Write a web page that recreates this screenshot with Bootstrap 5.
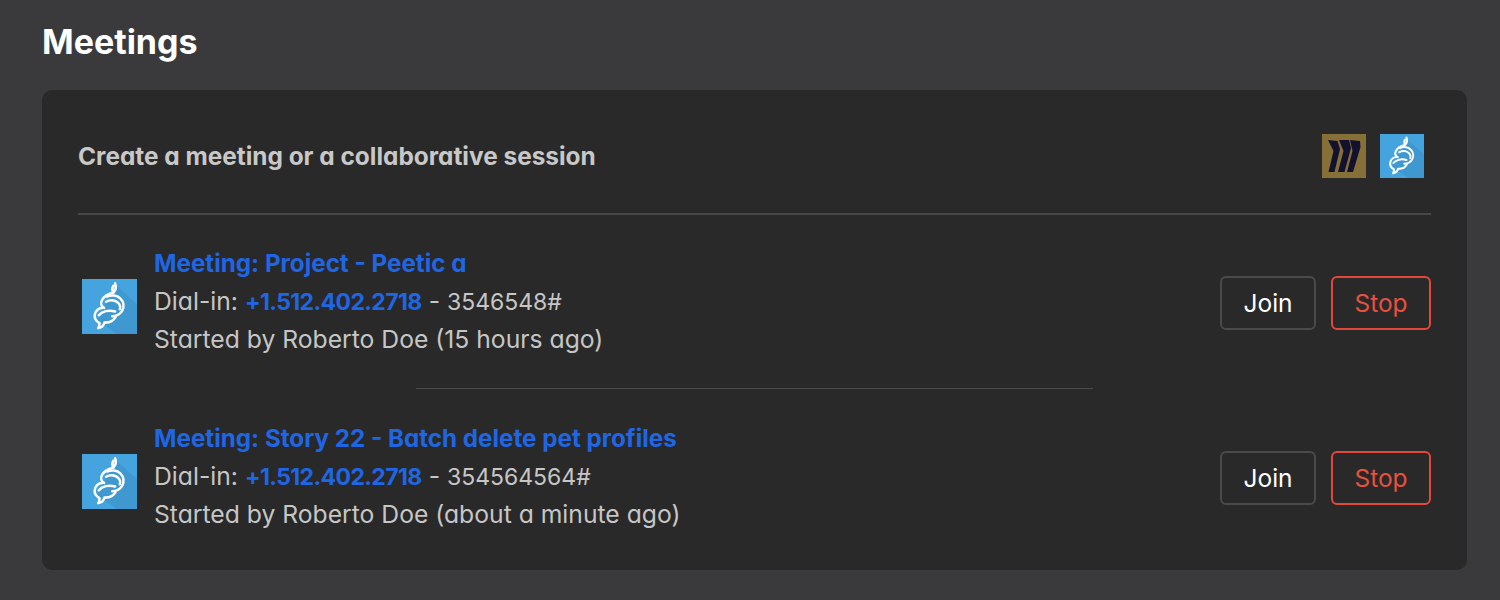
<!DOCTYPE html>
<html lang="en">
<head>
<meta charset="utf-8">
<title>Meetings</title>
<link href="https://cdn.jsdelivr.net/npm/bootstrap@5.3.0/dist/css/bootstrap.min.css" rel="stylesheet">
<style>
html,body{height:100%}
body{background:#3a3a3c;font-family:Inter,"Liberation Sans",sans-serif;font-feature-settings:"cv11";color:#c6c6c6;overflow:hidden}
.page-wrap{padding:20px 33px 0 42px;height:600px}
.page-title{font-size:34px;line-height:44px;font-weight:700;color:#fff;margin:0 0 26px}
.meet-panel{background:#292929;border-radius:10px;height:480px;padding:0 36px}
.panel-head{height:125px;padding-top:9px;border-bottom:2px solid #474747}
.panel-head-text{font-size:24.4px;font-weight:700;color:#c8c8c8}
.meet-row{height:174px}
.row-sep{width:677px;height:1px;background:#4c4c4c;margin:-1px auto 1px 338px}
.app-logo{display:block;width:44px;height:44px}
.row-logo{display:block;width:55px;height:55px;margin-top:8px}
.logo-slot{width:76px;padding-left:4px}
.text-block{margin-top:-3px}
.meet-line{font-size:24.7px;line-height:38px;height:38px}
.meet-line a{color:#1f66e5;font-weight:700;text-decoration:none}
.meet-line .title-link{font-size:24.2px}
.meet-line .phone-num{font-size:23px;letter-spacing:-.6px}
.plain-num{font-size:23px}
.meet-btn{font-size:24.5px;line-height:30px;height:54px;background:transparent;border-radius:6px;padding:0;margin-top:2px}
.btn-join{width:96px;color:#fff;border:2px solid #4a4a4a}
.btn-stop{width:100px;color:#e8503f;border:2px solid #e2493a}
.btn-join:hover{color:#fff;border-color:#4a4a4a}
.btn-stop:hover{color:#e8503f;border-color:#e2493a}
.logo-pair{gap:14px;margin-right:7px}
.btn-pair{gap:15px}
</style>
</head>
<body>
<svg width="0" height="0" class="d-block">
<defs>
<symbol id="jitsi" viewBox="0 0 44 44">
<rect width="44" height="44" fill="#45a4dd"/>
<path d="M27 5 L44 20 V44 H28 L12 33 Z" fill="#3f99d0"/>
<g fill="none" stroke="#fff" stroke-width="2" stroke-linecap="round" stroke-linejoin="round">
<path d="M26.500 3.500c.9 2.500.7 5.200-1.300 7.300-1-1.500-1.400-3.200-.2-5.300"/>
<path d="M25.200 10.800c-3.800 1-7.500 2.800-9.200 6-1.300 2.600-.5 5.200 1.700 6.400"/>
<path d="M20 14c3.500-1.600 8-1 10.600 1.500 3 2.700 3.400 7 1.400 10.200-1.700 2.500-4.700 4-7.800 4"/>
<path d="M19.300 18.200c3-1.500 6.700-1.300 9.200.5 1.700 1.400 2.400 3.500 1.800 5.500"/>
<path d="M17.500 23c-3.800-.3-6.800 2.200-7.300 5.800-.4 2.700 1.500 5.200 3.800 6.500 0 1.500-.3 2.800-1 4 2.800-.4 4.500-2.300 5-4.500 3.500.3 7-1.200 8.800-4.300"/>
<path d="M13.500 29c2.500-3.300 8-4.500 13-3"/>
</g>
</symbol>
</defs>
</svg>
<main class="page-wrap">
<h1 class="page-title">Meetings</h1>
<section class="meet-panel">
<div class="panel-head d-flex align-items-center justify-content-between">
<div class="panel-head-text">Create a meeting or a collaborative session</div>
<div class="d-flex logo-pair">
<svg class="app-logo" viewBox="0 0 44 44" role="img" aria-label="Miro"><rect width="44" height="44" fill="#867038"/><path d="M6 6l9.500 1 2.500 8-5.500 23H6.500l5-21zM17 6h10l2 8-6.500 24H16l5.500-21zM28 6l10 1 .5 6-7.500 25h-6l5.500-21z" fill="#12122e"/></svg>
<svg class="app-logo" role="img" aria-label="Jitsi"><use href="#jitsi"/></svg>
</div>
</div>
<div class="meet-row d-flex align-items-center">
<div class="logo-slot flex-shrink-0"><svg class="row-logo" role="img" aria-label="Jitsi"><use href="#jitsi"/></svg></div>
<div class="flex-grow-1 text-block">
<div class="meet-line"><a class="title-link" href="#">Meeting: Project - Peetic a</a></div>
<div class="meet-line">Dial-in: <a class="phone-num" href="#">+1.512.402.2718</a> - <span class="plain-num">3546548#</span></div>
<div class="meet-line">Started by Roberto Doe (15 hours ago)</div>
</div>
<div class="d-flex btn-pair"><button class="btn meet-btn btn-join" type="button">Join</button><button class="btn meet-btn btn-stop" type="button">Stop</button></div>
</div>
<div class="row-sep"></div>
<div class="meet-row d-flex align-items-center">
<div class="logo-slot flex-shrink-0"><svg class="row-logo" role="img" aria-label="Jitsi"><use href="#jitsi"/></svg></div>
<div class="flex-grow-1 text-block">
<div class="meet-line"><a class="title-link" href="#">Meeting: Story 22 - Batch delete pet profiles</a></div>
<div class="meet-line">Dial-in: <a class="phone-num" href="#">+1.512.402.2718</a> - <span class="plain-num">354564564#</span></div>
<div class="meet-line">Started by Roberto Doe (about a minute ago)</div>
</div>
<div class="d-flex btn-pair"><button class="btn meet-btn btn-join" type="button">Join</button><button class="btn meet-btn btn-stop" type="button">Stop</button></div>
</div>
</section>
</main>
<script src="https://cdn.jsdelivr.net/npm/bootstrap@5.3.0/dist/js/bootstrap.bundle.min.js"></script>
</body>
</html>
